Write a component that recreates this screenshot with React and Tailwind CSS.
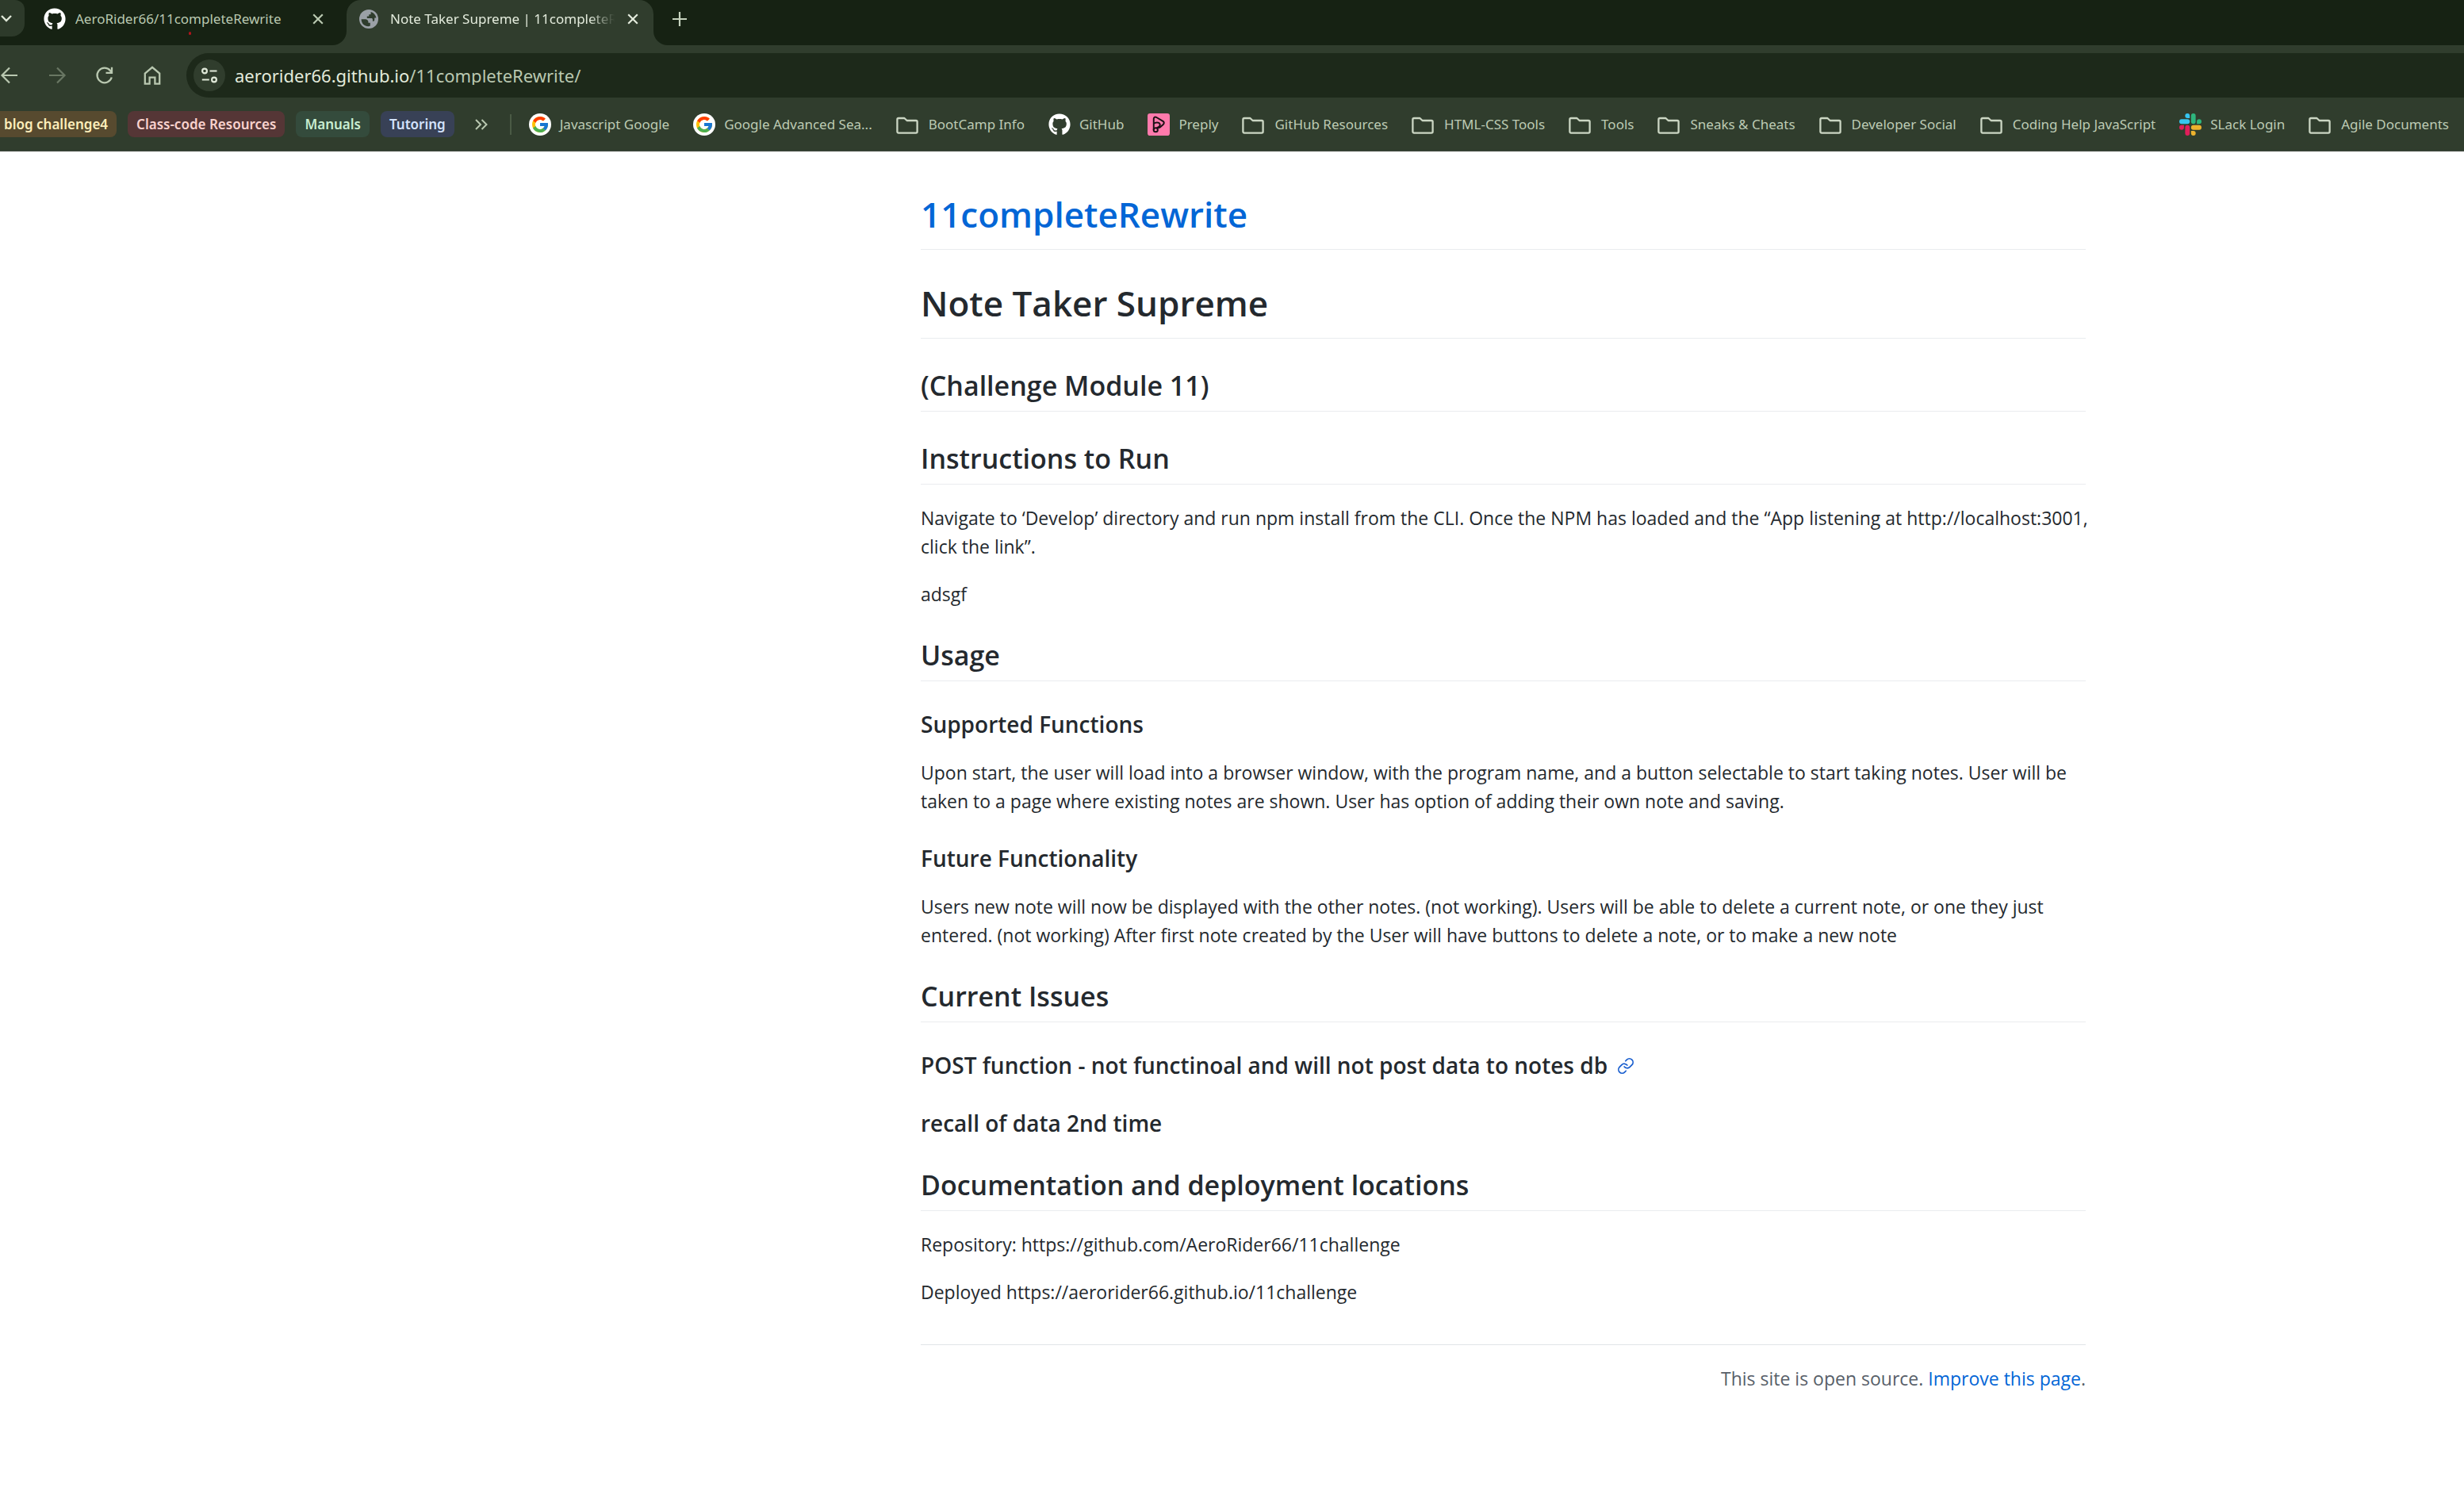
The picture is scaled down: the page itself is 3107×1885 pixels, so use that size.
import { FcGoogle } from "react-icons/fc";
import { FaGithub } from "react-icons/fa";

/* ---------- icons ---------- */

function Stroke({ className, box = 24, width = 2, children }) {
  return (
    <svg viewBox={`0 0 ${box} ${box}`} className={className} fill="none" stroke="currentColor" strokeWidth={width} aria-hidden="true">
      {children}
    </svg>
  );
}

function CloseIcon() {
  return (
    <Stroke className="size-[14px]" box={14} width={2.2}>
      <path d="M1.2 1.2 12.8 12.8M12.8 1.2 1.2 12.8" />
    </Stroke>
  );
}

function GlobeIcon() {
  return (
    <svg viewBox="0 0 24 24" className="size-6 shrink-0" aria-hidden="true">
      <circle cx="12" cy="12" r="12" fill="#9aa0a6" />
      <path
        d="M2.6 12.2h5.2c1.9 0 3.6 1.5 3.6 3.4v1.2h2.4v3.8c-.6.4-1.6.6-2.4.6C6.5 21.2 2.6 17.4 2.6 12.2ZM14.6 2.9c3.6 1 6.3 4 6.8 7.7h-2.2v2.6c0 .8-.7 1.5-1.5 1.5h-.8v-2.3c0-.8-.7-1.5-1.5-1.5H9.8V8.6h2.4V6.3h1.6c.5 0 .8-.3.8-.8Z"
        fill="#2f3d2d"
      />
    </svg>
  );
}

function FolderIcon() {
  return (
    <Stroke className="mr-[2px] size-7 shrink-0 text-[#cbd6c3]" box={28} width={2.3}>
      <path d="M3 6h7.400l3.200 3h11.400c.9 0 1.600.7 1.600 1.600v12.400c0 .9-.7 1.600-1.600 1.600H3c-.9 0-1.600-.7-1.600-1.600V7.600c0-.9.7-1.600 1.600-1.600Z" strokeLinejoin="round" />
    </Stroke>
  );
}

function GoogleIcon() {
  return (
    <span className="flex size-7 shrink-0 items-center justify-center rounded-full bg-white">
      <FcGoogle className="size-6" />
    </span>
  );
}

function GithubIcon() {
  return <FaGithub className="size-7 shrink-0 text-white" />;
}

function PreplyIcon() {
  return (
    <svg viewBox="0 0 27 27" className="size-7 shrink-0" aria-hidden="true">
      <rect width="27" height="27" rx="3" fill="#ff7aac" />
      <g fill="none" stroke="#1b1015" strokeWidth="1.9" strokeLinejoin="round">
        <path d="M7.500 20V6.600c0-1.800 1.500-2.700 3-2l8.300 5c1.500.9 1.500 2.400.5 3.600l-3.300 3c-.8.9-1.700 1.200-3 1.200H11" />
        <path d="M7.500 12.500c1.500-1.600 6.500-2.200 7.500.3.700 2-.8 3.700-3 4.200" />
        <circle cx="9.900" cy="20" r="2.500" />
      </g>
    </svg>
  );
}

function SlackIcon() {
  return (
    <svg viewBox="0 0 27 27" className="size-7 shrink-0" aria-hidden="true">
      <g fill="#36c5f0">
        <rect x="0" y="7.1" width="12.7" height="5.6" rx="2.8" />
        <path d="M9.9 0a2.8 2.8 0 0 1 2.8 2.8v2.9H9.9a2.85 2.85 0 0 1 0-5.7Z" />
      </g>
      <g fill="#2eb67d">
        <rect x="14.3" y="0" width="5.6" height="12.7" rx="2.8" />
        <path d="M27 9.9a2.8 2.8 0 0 1-2.8 2.8h-2.9V9.9a2.85 2.85 0 0 1 5.7 0Z" />
      </g>
      <g fill="#ecb22e">
        <rect x="14.3" y="14.3" width="12.7" height="5.6" rx="2.8" />
        <path d="M17.1 27a2.8 2.8 0 0 1-2.8-2.8v-2.9h2.8a2.85 2.85 0 0 1 0 5.7Z" />
      </g>
      <g fill="#e01e5a">
        <rect x="7.1" y="14.3" width="5.6" height="12.7" rx="2.8" />
        <path d="M0 17.1a2.8 2.8 0 0 1 2.8-2.8h2.9v2.8a2.85 2.85 0 0 1-5.7 0Z" />
      </g>
    </svg>
  );
}

/* ---------- browser chrome ---------- */

function TabStrip() {
  return (
    <div className="flex h-[57px] items-center overflow-hidden bg-[#162213]">
      <button aria-label="Search tabs" className="flex h-[46px] w-[31px] shrink-0 items-center self-start rounded-tr-xl rounded-br-2xl bg-[#2d3a2a] text-[#dfe8d8]">
        <Stroke className="h-[14px] w-4" box={14} width={2.4}>
          <path d="M1 4l6 6 6-6" />
        </Stroke>
      </button>

      <div className="relative ml-6 flex h-12 w-[353px] items-center gap-3 self-start text-[#b9c8b0]">
        <GithubIcon />
        <a href="#repo" className="min-w-0 flex-1 truncate">AeroRider66/11completeRewrite</a>
        <button aria-label="Close tab"><CloseIcon /></button>
        <span className="absolute top-10 left-[183px] h-1 w-[3px] rounded-full bg-[#b3141c]" />
      </div>

      <div className="relative ml-[29px] h-full w-[387px] rounded-t-[18px] bg-[#303d2d] text-[#e3ebdc]">
        <svg viewBox="0 0 18 18" className="absolute bottom-0 -left-[18px] size-[18px]" fill="#303d2d" aria-hidden="true">
          <path d="M18 0v18H0A18 18 0 0 0 18 0Z" />
        </svg>
        <svg viewBox="0 0 18 18" className="absolute -right-[18px] bottom-0 size-[18px]" fill="#303d2d" aria-hidden="true">
          <path d="M0 0v18h18A18 18 0 0 1 0 0Z" />
        </svg>
        <div className="flex h-12 items-center pr-[19px] pl-4">
          <GlobeIcon />
          <a href="#page" className="mr-1 ml-[15px] min-w-0 flex-1 whitespace-nowrap [mask-image:linear-gradient(to_right,black_85%,transparent_96%)]">
            Note Taker Supreme | 11completeR
          </a>
          <button aria-label="Close tab"><CloseIcon /></button>
        </div>
      </div>

      <button aria-label="New tab" className="ml-6 flex h-12 items-center self-start text-[#c6d3be]">
        <Stroke className="size-[18px]" box={18} width={2.2}>
          <path d="M9 0v18M0 9h18" />
        </Stroke>
      </button>
    </div>
  );
}

function Toolbar() {
  return (
    <div className="flex h-[76px] items-center text-[#b9c8b0]">
      <div className="flex gap-9">
        <button aria-label="Back">
          <Stroke className="size-6" width={2.2}><path d="M22 12H3M12 2.500 2.500 12l9.500 9.500" /></Stroke>
        </button>
        <button aria-label="Forward" className="text-[#697763]">
          <Stroke className="size-6" width={2.2}><path d="M2 12h19M12 2.500l9.500 9.500-9.500 9.500" /></Stroke>
        </button>
        <button aria-label="Reload">
          <Stroke className="size-6" width={2.3}>
            <path d="M20.800 14.500A9.300 9.300 0 1 1 19 6l2 2.500M21 1.800v7h-7.500" />
          </Stroke>
        </button>
        <button aria-label="Home">
          <Stroke className="size-6" width={2.3}>
            <path d="M2.800 9.600 12 1.800l9.200 7.800v13h-5.800v-8H8.600v8H2.800Z" />
          </Stroke>
        </button>
      </div>
      <form className="ml-[31px] flex h-14 flex-1 items-center rounded-l-full bg-[#1d291a] pl-[9px] text-[22px]">
        <button type="button" aria-label="View site information" className="mr-3 flex size-10 shrink-0 items-center justify-center rounded-full bg-[#303d2d] text-[#dfe8d8]">
          <Stroke className="size-5" box={20} width={2.2}>
            <circle cx="4" cy="4.500" r="2.900" />
            <path d="M10.500 4.500H19.500M.8 15.500h9" />
            <circle cx="16" cy="15.500" r="2.900" />
          </Stroke>
        </button>
        <label htmlFor="address" className="text-[#e3ebdc]">aerorider66.github.io</label>
        <input id="address" defaultValue="/11completeRewrite/" className="min-w-0 flex-1 bg-transparent text-[#bac8b1] outline-none" />
      </form>
    </div>
  );
}

const bookmarks = [
  [GoogleIcon, "Javascript Google"],
  [GoogleIcon, "Google Advanced Sea..."],
  [FolderIcon, "BootCamp Info"],
  [GithubIcon, "GitHub"],
  [PreplyIcon, "Preply"],
  [FolderIcon, "GitHub Resources"],
  [FolderIcon, "HTML-CSS Tools"],
  [FolderIcon, "Tools"],
  [FolderIcon, "Sneaks & Cheats"],
  [FolderIcon, "Developer Social"],
  [FolderIcon, "Coding Help JavaScript"],
  [SlackIcon, "SLack Login"],
  [FolderIcon, "Agile Documents"],
];

function Chip({ className, children }) {
  return <button className={`h-[33px] shrink-0 rounded-lg font-semibold ${className}`}>{children}</button>;
}

function BookmarksBar() {
  return (
    <nav aria-label="Bookmarks" className="flex h-[58px] items-start overflow-hidden border-b border-[#454c43] pt-[7px] whitespace-nowrap">
      <div className="flex h-[33px] items-center">
        <div className="flex items-center gap-[14px]">
          <Chip className="rounded-l-none bg-[#574a2f] pr-[11px] pl-[5px] text-[#fdeebb]">blog challenge4</Chip>
          <Chip className="bg-[#553636] px-[11px] text-[#f9d2cd]">Class-code Resources</Chip>
          <Chip className="bg-[#344b3c] px-[11px] text-[#c9eed2]">Manuals</Chip>
          <Chip className="bg-[#384156] px-[11px] text-[#d3e2fc]">Tutoring</Chip>
        </div>
        <button aria-label="More groups" className="ml-[26px] text-[#b9c8b0]">
          <Stroke className="size-4" box={16} width={2}><path d="M1 2l6 6-6 6M8.500 2l6 6-6 6" /></Stroke>
        </button>
        <span className="ml-7 h-[26px] w-[2px] shrink-0 bg-[#4a5a45]" />
        <ul className="ml-[22px] flex items-center gap-[30px] text-[#bdcbb4]">
          {bookmarks.map(([Icon, name]) => (
            <li key={name}>
              <a href="#bookmark" className="flex items-center gap-[11px]"><Icon />{name}</a>
            </li>
          ))}
        </ul>
      </div>
    </nav>
  );
}

/* ---------- page ---------- */

function H1({ children }) {
  return <h1 className="mb-6 border-b border-[#eaecef] pb-[13px] text-[44px] leading-[62px] font-semibold">{children}</h1>;
}
function H2({ children }) {
  return <h2 className="mt-9 mb-6 border-b border-[#eaecef] pb-[9px] text-[34px] leading-[46px] font-semibold">{children}</h2>;
}
function H3({ children }) {
  return <h3 className="mt-9 mb-6 flex items-center gap-3 text-[28px] leading-[37px] font-semibold">{children}</h3>;
}
function P({ children }) {
  return <p className="mb-6 whitespace-nowrap">{children}</p>;
}

export default function App() {
  return (
    <div className="min-h-screen bg-white font-['Noto_Sans',sans-serif]">
      <header className="bg-[#303d2d] text-[17px] leading-6">
        <TabStrip />
        <Toolbar />
        <BookmarksBar />
      </header>

      <div className="flex justify-end pt-12 pr-[477px] pb-12">
        <main className="w-[1469px] font-['Open_Sans',sans-serif] text-[23px] leading-9 text-[#24292e]">
          <H1><a href="#home" className="text-[#0366d6]">11completeRewrite</a></H1>
          <div className="pt-3"><H1>Note Taker Supreme</H1></div>
          <H2>(Challenge Module 11)</H2>
          <H2>Instructions to Run</H2>
          <P>
            Navigate to ‘Develop’ directory and run npm install from the CLI. Once the NPM has loaded and the “App listening at http://localhost:3001,
            <br />
            click the link”.
          </P>
          <P>adsgf</P>

          <H2>Usage</H2>
          <H3>Supported Functions</H3>
          <P>
            Upon start, the user will load into a browser window, with the program name, and a button selectable to start taking notes. User will be
            <br />
            taken to a page where existing notes are shown. User has option of adding their own note and saving.
          </P>
          <H3>Future Functionality</H3>
          <P>
            Users new note will now be displayed with the other notes. (not working). Users will be able to delete a current note, or one they just
            <br />
            entered. (not working) After first note created by the User will have buttons to delete a note, or to make a new note
          </P>

          <H2>Current Issues</H2>
          <H3>
            POST function - not functinoal and will not post data to notes db
            <a href="#post-function" aria-label="Link to this section" className="text-[#1a5fcf]">
              <Stroke className="size-[22px]" width={1.9}>
                <path strokeLinecap="round" d="M10 13a5 5 0 0 0 7.54.54l3-3a5 5 0 0 0-7.07-7.07l-1.72 1.71M14 11a5 5 0 0 0-7.54-.54l-3 3a5 5 0 0 0 7.07 7.07l1.71-1.71" />
              </Stroke>
            </a>
          </H3>
          <H3>recall of data 2nd time</H3>

          <H2>Documentation and deployment locations</H2>
          <P>Repository: https://github.com/AeroRider66/11challenge</P>
          <P>Deployed https://aerorider66.github.io/11challenge</P>

          <footer className="mt-12 border-t border-[#e1e4e8] pt-6 text-right text-[#586069]">
            This site is open source. <a href="#improve" className="text-[#0366d6]">Improve this page</a>.
          </footer>
        </main>
      </div>
    </div>
  );
}
